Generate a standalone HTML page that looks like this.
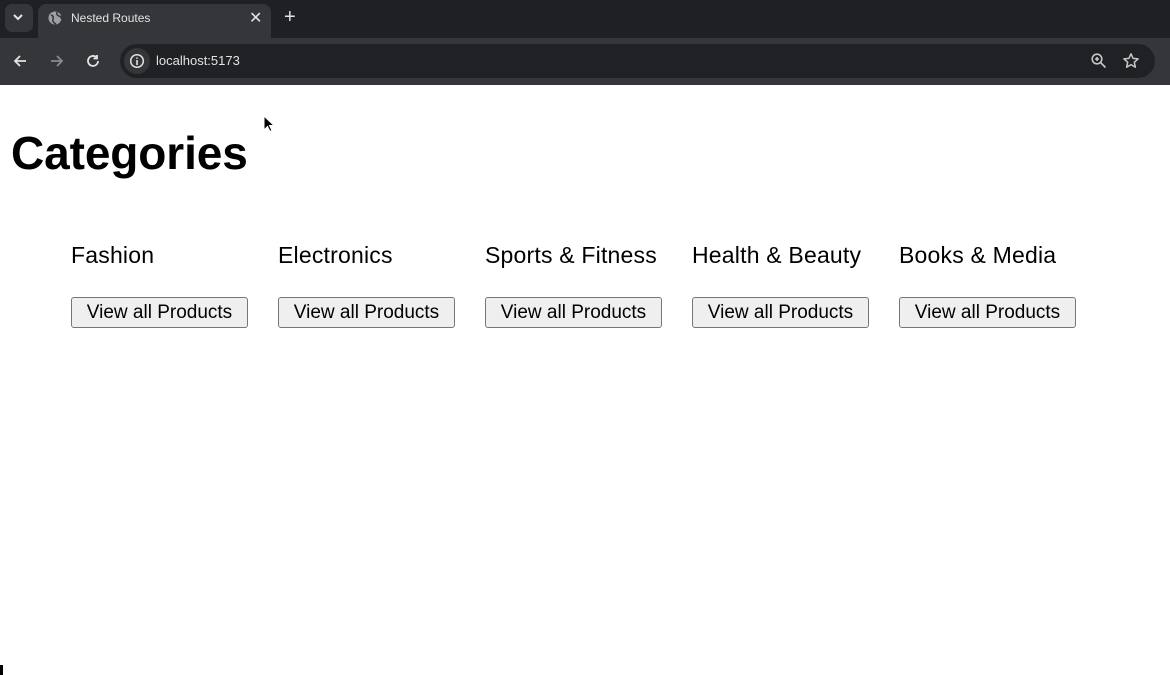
<!DOCTYPE html>
<html><head><meta charset="utf-8"><style>
*{margin:0;padding:0;box-sizing:border-box}
body{width:1170px;height:675px;overflow:hidden;background:#fff;font-family:"Liberation Sans",sans-serif;position:relative}
.tabbar{position:absolute;left:0;top:0;width:1170px;height:38px;background:#1f2026}
.tb{position:absolute;left:0;top:38px;width:1170px;height:47px;background:#35363a}
.tab{position:absolute;left:38px;top:4px;width:233px;height:40px;background:#35363a;border-radius:8px 8px 0 0}
.dd{position:absolute;left:5px;top:4px;width:28px;height:28px;background:#35363a;border-radius:7px}
.omni{position:absolute;left:120px;top:44px;width:1035px;height:34px;background:#202124;border-radius:17px}
.t{position:absolute;color:#e3e3e3;font-size:12px}
h1{position:absolute;left:11px;top:126px;font-size:46px;font-weight:bold;color:#000;letter-spacing:-0.1px}
.cat{position:absolute;top:242px;width:200px}
.cat h3{font-weight:normal;font-size:23px;color:#000;height:55px;white-space:nowrap;letter-spacing:0.2px}
.cat button{width:177px;height:31px;font-family:"Liberation Sans",sans-serif;font-size:19px;background:#efefef;border:1px solid #767676;border-radius:3px;color:#000}
</style></head><body>
<div class="tabbar"></div>
<div class="tb"></div>
<div class="dd"></div>
<svg style="position:absolute;left:13px;top:13px" width="10" height="8"><path d="M1 2l4 4 4-4" stroke="#e3e3e3" stroke-width="2" fill="none"/></svg>
<div class="tab"></div>
<svg style="position:absolute;left:48px;top:11px" width="14" height="14"><circle cx="7" cy="7" r="6.5" fill="#9aa0a6"/><path d="M3 4q3 1 2 4t3 5M9 1q-1 3 2 4t2 3" stroke="#35363a" stroke-width="1.5" fill="none"/></svg>
<div class="t" style="left:71px;top:11px">Nested Routes</div>
<div class="t" style="left:249px;top:8px;font-size:16px">✕</div>
<div class="t" style="left:284px;top:6px;font-size:20px">+</div>
<svg style="position:absolute;left:12px;top:53px" width="16" height="16"><path d="M14 8H3M8 3L3 8l5 5" stroke="#e3e3e3" stroke-width="1.8" fill="none"/></svg>
<svg style="position:absolute;left:49px;top:53px" width="16" height="16"><path d="M2 8h11M8 3l5 5-5 5" stroke="#8a8b8e" stroke-width="1.8" fill="none"/></svg>
<svg style="position:absolute;left:85px;top:53px" width="16" height="16"><path d="M13 8a5 5 0 1 1-1.5-3.6M12 2v3.5H8.5" stroke="#e3e3e3" stroke-width="1.8" fill="none"/></svg>
<div class="omni"></div>
<div style="position:absolute;left:124px;top:48px;width:26px;height:26px;border-radius:13px;background:#35363a"></div>
<svg style="position:absolute;left:129px;top:53px" width="16" height="16"><circle cx="8" cy="8" r="6.3" stroke="#e3e3e3" stroke-width="1.5" fill="none"/><path d="M8 7v5M8 4.5v1.2" stroke="#e3e3e3" stroke-width="1.6"/></svg>
<div class="t" style="left:156px;top:53px;font-size:13px">localhost:5173</div>
<svg style="position:absolute;left:1090px;top:52px" width="18" height="18"><circle cx="7" cy="7" r="4.8" stroke="#c4c7c5" stroke-width="1.6" fill="none"/><path d="M10.5 10.5l5 5M5 7h4M7 5v4" stroke="#c4c7c5" stroke-width="1.6"/></svg>
<svg style="position:absolute;left:1122px;top:52px" width="18" height="18"><path d="M9 1.8l2.1 4.6 5 .5-3.8 3.3 1.1 5-4.4-2.6-4.4 2.6 1.1-5L1.9 6.9l5-.5z" stroke="#c4c7c5" stroke-width="1.5" fill="none" stroke-linejoin="round"/></svg>
<h1>Categories</h1>
<div class="cat" style="left:71px"><h3>Fashion</h3><button>View all Products</button></div>
<div class="cat" style="left:278px"><h3>Electronics</h3><button>View all Products</button></div>
<div class="cat" style="left:485px"><h3>Sports &amp; Fitness</h3><button>View all Products</button></div>
<div class="cat" style="left:692px"><h3>Health &amp; Beauty</h3><button>View all Products</button></div>
<div class="cat" style="left:899px"><h3>Books &amp; Media</h3><button>View all Products</button></div>
<svg style="position:absolute;left:263px;top:115px" width="12" height="18"><path d="M1 1v14l3.5-3.5 2.5 5 2-1-2.5-5H11z" fill="#000" stroke="#fff" stroke-width="1"/></svg>
<div style="position:absolute;left:0;top:665px;width:3px;height:10px;background:#000"></div>
</body></html>
